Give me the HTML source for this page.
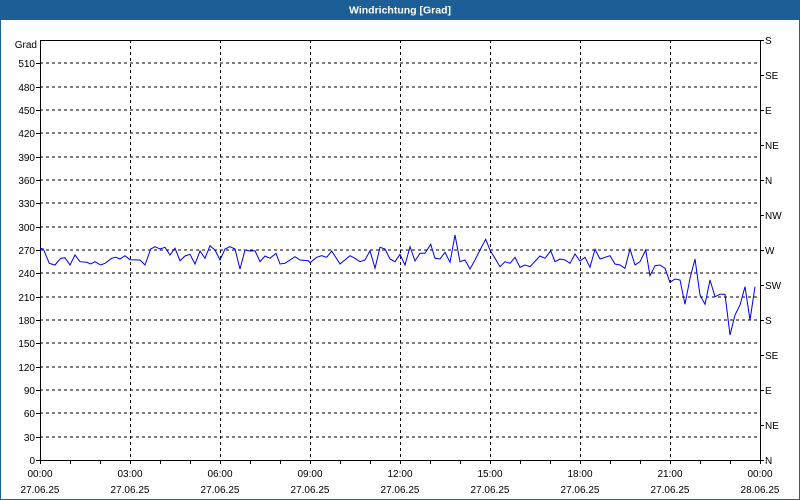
<!DOCTYPE html>
<html><head><meta charset="utf-8"><style>
html,body{margin:0;padding:0;width:800px;height:500px;overflow:hidden;background:#fff}
svg{display:block}
text{font-family:"Liberation Sans",sans-serif;font-size:10px;fill:#000}
</style></head><body>
<svg width="800" height="500" viewBox="0 0 800 500">
<rect x="0" y="0" width="800" height="500" fill="#1c5f97"/>
<rect x="1" y="20" width="798" height="479" fill="#fdfefd"/>
<text x="400" y="13.5" text-anchor="middle" style="font-weight:bold;font-size:10.5px;fill:#fff">Windrichtung [Grad]</text>
<g stroke="#000" stroke-width="1" stroke-dasharray="3,3" shape-rendering="crispEdges">
<path d="M40 437H760M40 413H760M40 390H760M40 367H760M40 343H760M40 320H760M40 297H760M40 273H760M40 250H760M40 227H760M40 203H760M40 180H760M40 157H760M40 133H760M40 110H760M40 87H760M40 63H760"/>
<path d="M130.5 40V460M220.5 40V460M310.5 40V460M400.5 40V460M490.5 40V460M580.5 40V460M670.5 40V460"/>
</g>
<g stroke="#000" stroke-width="1" fill="none" shape-rendering="crispEdges">
<rect x="40.5" y="40.5" width="720" height="420"/>
<path d="M36 460.5H40M36 437.5H40M36 413.5H40M36 390.5H40M36 367.5H40M36 343.5H40M36 320.5H40M36 297.5H40M36 273.5H40M36 250.5H40M36 227.5H40M36 203.5H40M36 180.5H40M36 157.5H40M36 133.5H40M36 110.5H40M36 87.5H40M36 63.5H40"/>
<path d="M760 40.5H764M760 75.5H764M760 110.5H764M760 145.5H764M760 180.5H764M760 215.5H764M760 250.5H764M760 285.5H764M760 320.5H764M760 355.5H764M760 390.5H764M760 425.5H764M760 460.5H764"/>
<path d="M40.5 460V464M70.5 460V464M100.5 460V464M130.5 460V464M160.5 460V464M190.5 460V464M220.5 460V464M250.5 460V464M280.5 460V464M310.5 460V464M340.5 460V464M370.5 460V464M400.5 460V464M430.5 460V464M460.5 460V464M490.5 460V464M520.5 460V464M550.5 460V464M580.5 460V464M610.5 460V464M640.5 460V464M670.5 460V464M700.5 460V464M730.5 460V464M760.5 460V464"/>
</g>
<g text-anchor="end">
<text x="37" y="48">Grad</text>
<text x="35" y="464">0</text><text x="35" y="441">30</text><text x="35" y="417">60</text><text x="35" y="394">90</text><text x="35" y="371">120</text><text x="35" y="347">150</text><text x="35" y="324">180</text><text x="35" y="301">210</text><text x="35" y="277">240</text><text x="35" y="254">270</text><text x="35" y="231">300</text><text x="35" y="207">330</text><text x="35" y="184">360</text><text x="35" y="161">390</text><text x="35" y="137">420</text><text x="35" y="114">450</text><text x="35" y="91">480</text><text x="35" y="67">510</text>
</g>
<g>
<text x="765" y="44">S</text><text x="765" y="79">SE</text><text x="765" y="114">E</text><text x="765" y="149">NE</text><text x="765" y="184">N</text><text x="765" y="219">NW</text><text x="765" y="254">W</text><text x="765" y="289">SW</text><text x="765" y="324">S</text><text x="765" y="359">SE</text><text x="765" y="394">E</text><text x="765" y="429">NE</text><text x="765" y="464">N</text>
</g>
<g text-anchor="middle">
<text x="40" y="477">00:00</text><text x="130" y="477">03:00</text><text x="220" y="477">06:00</text><text x="310" y="477">09:00</text><text x="400" y="477">12:00</text><text x="490" y="477">15:00</text><text x="580" y="477">18:00</text><text x="670" y="477">21:00</text><text x="760" y="477">00:00</text>
<text x="40" y="493">27.06.25</text><text x="130" y="493">27.06.25</text><text x="220" y="493">27.06.25</text><text x="310" y="493">27.06.25</text><text x="400" y="493">27.06.25</text><text x="490" y="493">27.06.25</text><text x="580" y="493">27.06.25</text><text x="670" y="493">27.06.25</text><text x="760" y="493">28.06.25</text>
</g>
<polyline fill="none" stroke="#0000ee" stroke-width="1" points="40,248.3 43.3,249 49.3,263.3 55,265 60.7,258.3 65,257.7 70,265 75,255 80,261.7 86.7,262.3 90.7,264 95,261.7 100.7,265 105,263.3 111.7,258.3 116,257.3 120,259 125,255.7 130,259.7 140,260 145,265 150.7,249 155,246.7 160,249 165,247.3 170,255 175,248.3 180,260.7 185,256 190,254.3 195,264 200,251 205,258.3 210,245.7 215,250 220,260 225,249 230,246.7 235,249 240,269 245,250 250,251 255,250.7 260,261.7 265,256 270,258.3 276,253.3 280,264 285,263.3 295,256.7 300,260 308.3,260.7 310,262.7 316.7,257.3 321.7,255.7 326.7,257.3 331.7,251 340,264 350,255.7 355,258.3 360,261.7 365,260 370,250.7 375,268.3 380,247.3 385,249 390,259 395,261.7 400,254.3 405,265 410,246.7 415,261 420,253.3 425,253.3 430.7,244.3 435,258.3 440,259 445,252.3 450,262.3 455,235 460,261.7 465,260 470,269 475,260 480,250 485.7,239.3 490,250 495,258.3 500,266.7 505,261.7 510,263.3 515,257.3 520,267.3 525,265 530,266.7 540,256 545,258.3 550.7,250.7 555,261.7 560,259 565,260 570,263.3 575,254 580,261 585,257.3 590,267.3 595,249.3 600,259 610,255.7 615,264 620,265 625,268.3 630,249 635,265 640,261.7 645.7,250 650,275.7 655,265.7 660,265 665,268.3 670,282.3 675,279 680,280 685,304.3 690,278.3 695,259 700,295 705,304.3 710,280 715,296.7 720,294.3 725,294.3 730,335 735,315 740,305 745,286.7 750,320 755,286.7"/>
</svg>
</body></html>
